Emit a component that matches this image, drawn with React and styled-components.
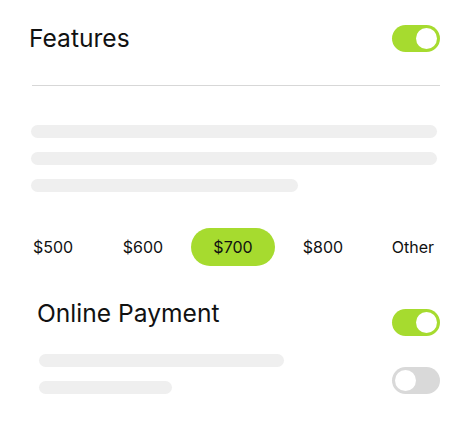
import styled, { createGlobalStyle } from 'styled-components'

const GlobalStyle = createGlobalStyle`
    body {
        margin: 0;
        background: #ffffff;
        font-family: Inter, 'Noto Sans', sans-serif;
        color: #111111;
    }
`;

const GREEN = '#a6db2f';

const Container = styled.div`
    width: 466px;
    height: 429px;
    padding-top: 23px;
    box-sizing: border-box;
    overflow: hidden;
`;

const Header = styled.div`
    display: flex;
    align-items: center;
    justify-content: space-between;
    padding: 0 26px 0 29px;
`;

const Title = styled.h1`
    margin: 0;
    font-size: 24.6px;
    line-height: 30px;
    font-weight: 400;
    letter-spacing: 0;
`;

const Switch = styled.div`
    position: relative;
    width: 48px;
    height: 27px;
    border-radius: 14px;
    background-color: ${p => (p.$on ? GREEN : '#d9d9d9')};
    flex-shrink: 0;
    margin-top: ${p => p.$offset || 0}px;

    &::after {
        content: '';
        position: absolute;
        top: 3px;
        left: ${p => (p.$on ? '24px' : '3px')};
        width: 21px;
        height: 21px;
        border-radius: 50%;
        background: #ffffff;
    }
`;

const Divider = styled.hr`
    margin: 32px 26px 0 32px;
    border: none;
    height: 1px;
    background-color: #d7d7d7;
`;

const Lines = styled.div`
    display: flex;
    flex-direction: column;
    gap: 14px;
    margin: ${p => p.$margin || '0'};
`;

const Bar = styled.div`
    height: 13px;
    border-radius: 7px;
    background-color: #efefef;
    width: ${p => p.$width || '100%'};
`;

const Prices = styled.div`
    display: grid;
    grid-template-columns: repeat(5, 90px);
    padding: 0 8px;
    margin-top: 36px;
`;

const Price = styled.button`
    justify-self: center;
    width: 84px;
    height: 38px;
    border: none;
    border-radius: 19px;
    background-color: ${p => (p.$active ? GREEN : 'transparent')};
    font-family: Inter, 'Noto Sans', sans-serif;
    font-size: 16px;
    color: #111111;
    cursor: pointer;
    padding: 0;
`;

const Section = styled.div`
    margin-top: 32px;
    padding: 0 26px 0 37px;
`;

const Row = styled.div`
    display: flex;
    align-items: flex-start;
    justify-content: space-between;
    margin-top: ${p => p.$gap || 0}px;
`;

const prices = ['$500', '$600', '$700', '$800', 'Other'];

const App = () => {
  return (
    <Container>
        <GlobalStyle />
        <Header>
            <Title>Features</Title>
            <Switch $on />
        </Header>
        <Divider />
        <Lines $margin='39px 29px 0 31px'>
            <Bar />
            <Bar />
            <Bar $width='267px' />
        </Lines>
        <Prices>
            {prices.map(p => (
                <Price key={p} $active={p === '$700'}>{p}</Price>
            ))}
        </Prices>
        <Section>
            <Row>
                <Title>Online Payment</Title>
                <Switch $on $offset={11} />
            </Row>
            <Row $gap={18}>
                <Lines $margin='0 0 0 2px'>
                    <Bar $width='245px' />
                    <Bar $width='133px' />
                </Lines>
                <Switch $offset={13} />
            </Row>
        </Section>
    </Container>
  )
}

export default App
